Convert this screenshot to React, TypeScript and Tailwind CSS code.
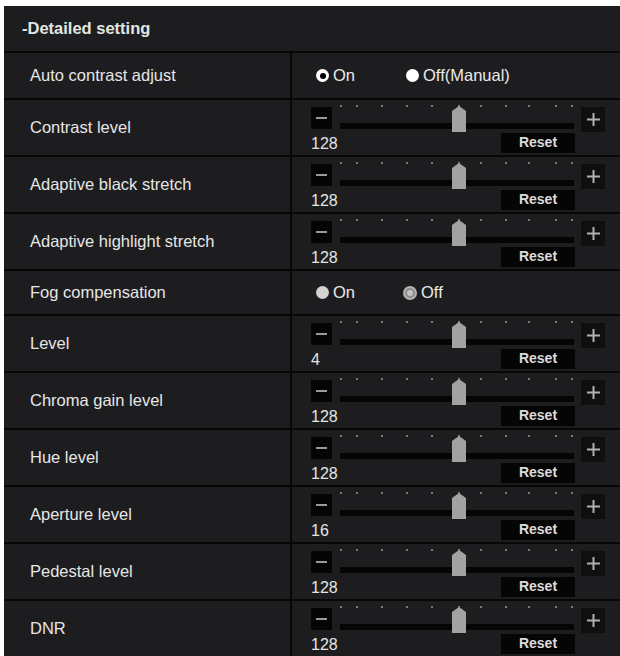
import React from "react";

type Row =
  | { kind: "radio"; label: string; options: { text: string; state: "on" | "off" | "dimOn" | "dimOff" }[]; gap: string }
  | { kind: "slider"; label: string; value: string };

const rows: Row[] = [
  {
    kind: "radio",
    label: "Auto contrast adjust",
    gap: "gap-[51px]",
    options: [
      { text: "On", state: "on" },
      { text: "Off(Manual)", state: "off" },
    ],
  },
  { kind: "slider", label: "Contrast level", value: "128" },
  { kind: "slider", label: "Adaptive black stretch", value: "128" },
  { kind: "slider", label: "Adaptive highlight stretch", value: "128" },
  {
    kind: "radio",
    label: "Fog compensation",
    gap: "gap-[48px]",
    options: [
      { text: "On", state: "dimOff" },
      { text: "Off", state: "dimOn" },
    ],
  },
  { kind: "slider", label: "Level", value: "4" },
  { kind: "slider", label: "Chroma gain level", value: "128" },
  { kind: "slider", label: "Hue level", value: "128" },
  { kind: "slider", label: "Aperture level", value: "16" },
  { kind: "slider", label: "Pedestal level", value: "128" },
  { kind: "slider", label: "DNR", value: "128" },
];

const ticks = [1, 17, 42, 67, 92, 119, 141, 166, 189, 216, 232];

/* ─── Radio dot ─── */
function RadioDot({ state }: { state: "on" | "off" | "dimOn" | "dimOff" }) {
  if (state === "on") {
    return (
      <span className="w-[13px] h-[13px] rounded-full bg-white flex items-center justify-center">
        <span className="w-[6px] h-[6px] rounded-full bg-black" />
      </span>
    );
  }
  if (state === "off") {
    return <span className="w-[13px] h-[13px] rounded-full bg-white" />;
  }
  if (state === "dimOn") {
    return (
      <span className="w-[14px] h-[14px] rounded-full bg-[#b4b4b4] flex items-center justify-center">
        <span className="w-[10px] h-[10px] rounded-full bg-[#8c8c8c] flex items-center justify-center">
          <span className="w-[6px] h-[6px] rounded-full bg-[#c4c4c4]" />
        </span>
      </span>
    );
  }
  return <span className="w-[13px] h-[13px] rounded-full bg-[#d2d2d2]" />;
}

/* ─── Slider cell ─── */
function SliderCell({ value }: { value: string }) {
  return (
    <div className="flex flex-col pt-[5px]">
      <div className="flex items-start h-[27px] pl-[19px]">
        <div className="mt-[2px] w-[21px] h-[22px] bg-[#050505] flex items-center justify-center">
          <span className="w-[11px] h-[2px] bg-[#9a9a9a]" />
        </div>
        <svg width="234" height="28" className="ml-[8px]" viewBox="0 0 234 28">
          {ticks.map(x => (
            <rect key={x} x={x - 1} y={0} width={2} height={2} fill="#7a7a7a" />
          ))}
          <rect x={0} y={18} width={234} height={6} fill="#050505" />
          <polygon points="112,6 119,1 126,6 126,27 112,27" fill="#a2a2a2" />
        </svg>
        <div className="mt-[2px] ml-[7px] w-[24px] h-[25px] bg-[#0f0f0f] flex items-center justify-center">
          <svg width="13" height="13" viewBox="0 0 13 13">
            <rect x="0" y="5.5" width="13" height="2" fill="#b0b0b0" />
            <rect x="5.5" y="0" width="2" height="13" fill="#b0b0b0" />
          </svg>
        </div>
      </div>
      <div className="flex items-center h-[21px] pl-[19px]">
        <span className="w-[190px] mt-[3px] text-[16px] leading-none text-[#e4e4e4]">{value}</span>
        <span className="w-[74px] h-[20px] bg-[#050505] flex items-center justify-center text-[14px] font-bold text-[#dcdcdc]">
          Reset
        </span>
      </div>
    </div>
  );
}

export default function App() {
  return (
    <div
      className="w-[620px] h-[656px] overflow-hidden bg-white pt-[6px] pl-[4px]"
      style={{ fontFamily: '"Liberation Sans", Arial, sans-serif' }}
    >
      <div className="bg-[#1d1d1f] h-full">
        {/* Header */}
        <div className="h-[47px] flex items-center pl-[18px] border-b-2 border-[#070707]">
          <span className="text-[16.5px] font-bold text-[#e2e6e2]">-Detailed setting</span>
        </div>

        {rows.map(row => {
          const height =
            row.kind === "slider" ? "h-[57px]" : row.label === "Fog compensation" ? "h-[45px]" : "h-[47px]";
          return (
            <div key={row.label} className={`flex ${height} border-b-2 border-[#070707]`}>
              <div className="w-[288px] shrink-0 flex items-center pl-[26px] border-r-2 border-[#070707]">
                <span className="text-[16.5px] text-[#e6e6e6]">{row.label}</span>
              </div>
              <div className="flex-1">
                {row.kind === "slider" ? (
                  <SliderCell value={row.value} />
                ) : (
                  <div className={`h-full flex items-center pl-[24px] ${row.gap}`}>
                    {row.options.map(o => (
                      <div key={o.text} className="flex items-center gap-[4px]">
                        <RadioDot state={o.state} />
                        <span className="text-[16.5px] text-[#eaeaea]">{o.text}</span>
                      </div>
                    ))}
                  </div>
                )}
              </div>
            </div>
          );
        })}
      </div>
    </div>
  );
}
